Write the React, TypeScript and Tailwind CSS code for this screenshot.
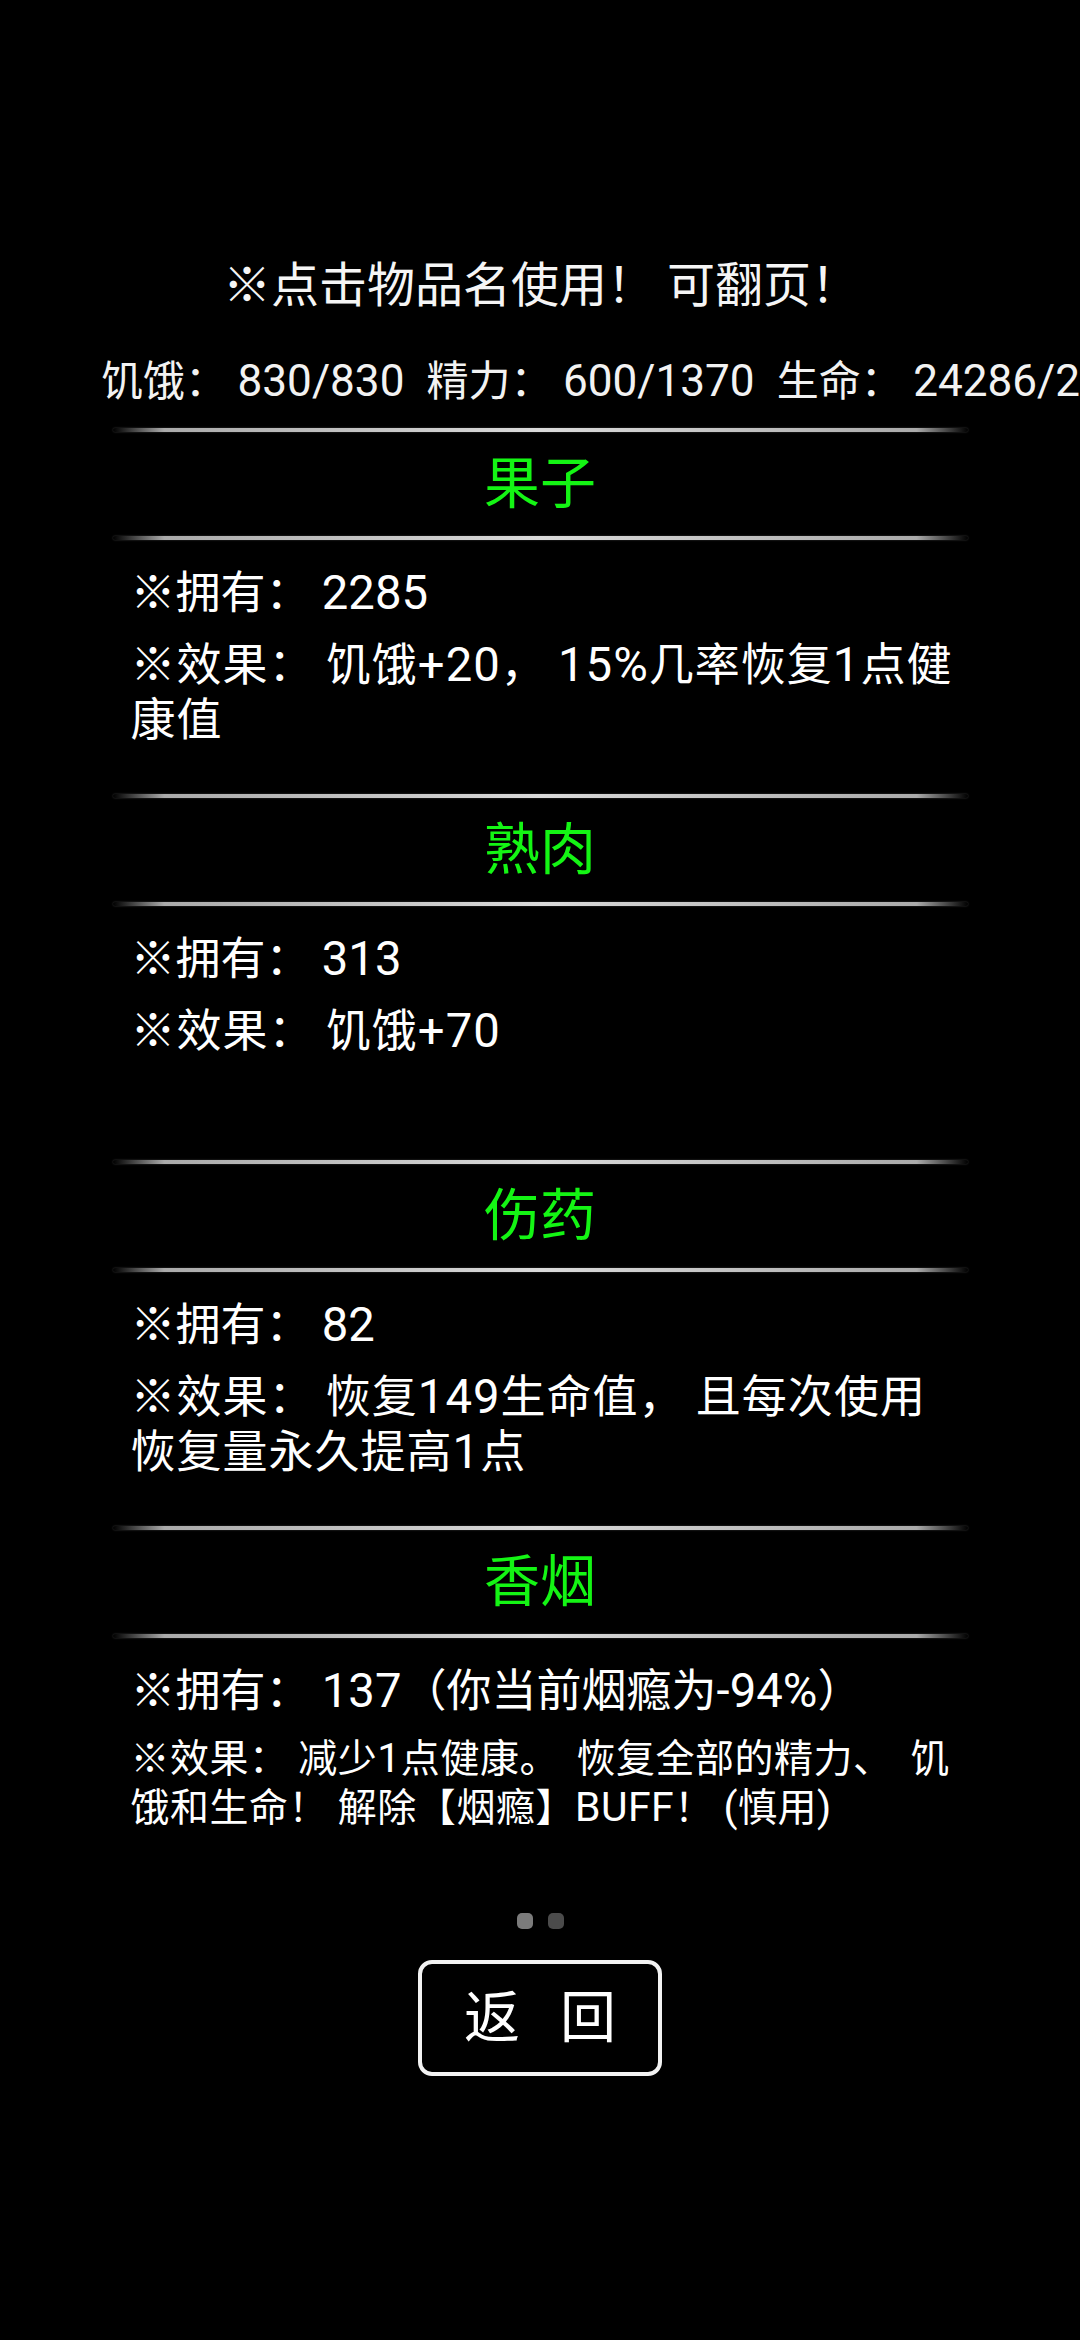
import React from 'react';

type Item = {
  name: string;
  owned: string;
  effect: string;
  small?: boolean;
};

const items: Item[] = [
  { name: '果子', owned: '2285', effect: '饥饿+20，15%几率恢复1点健康值' },
  { name: '熟肉', owned: '313', effect: '饥饿+70' },
  { name: '伤药', owned: '82', effect: '恢复149生命值，且每次使用恢复量永久提高1点' },
  {
    name: '香烟',
    owned: '137（你当前烟瘾为-94%）',
    effect: '减少1点健康。恢复全部的精力、饥饿和生命！解除【烟瘾】BUFF！(慎用)',
    small: true,
  },
];

// the game font gives full-width punctuation a wider cell and slightly bigger digits
const spaced = (text: string, latin = 'text-[1.05em]') => {
  const out: React.ReactNode[] = [];
  let run = '';
  const flush = () => {
    if (run) {
      out.push(<span key={out.length} className={latin}>{run}</span>);
      run = '';
    }
  };
  for (const c of text) {
    if (c.charCodeAt(0) < 128) {
      run += c;
      continue;
    }
    flush();
    if ('：，！'.includes(c)) out.push(<span key={out.length} className="mr-[0.25em]">{c}</span>);
    else if ('。、'.includes(c)) out.push(<span key={out.length} className="mr-[0.45em]">{c}</span>);
    else out.push(c);
  }
  flush();
  return out;
};

const Divider: React.FC = () => (
  <div className="h-[4px] w-full rounded-full bg-[linear-gradient(90deg,rgba(200,200,200,0)_0%,rgba(200,200,200,0.85)_6%,#dadada_50%,rgba(200,200,200,0.85)_94%,rgba(200,200,200,0)_100%)] shadow-[0_0_2px_rgba(255,255,255,0.25)]" />
);

const ItemBlock: React.FC<{ item: Item }> = ({ item }) => (
  <div className="h-[366px]">
    <Divider />
    <div className="h-[104px] flex items-center justify-center text-[56px] leading-none text-[#14f514]">
      {item.name}
    </div>
    <Divider />
    <div className="pl-[18px] pr-[10px] pt-[26px] text-white">
      <p className="text-[45px] leading-[55px] whitespace-nowrap">{spaced('※拥有：' + item.owned)}</p>
      {item.small ? (
        <p className="mt-[15px] text-[39px] leading-[48px] tracking-[0.5px]">{spaced('※效果：' + item.effect)}</p>
      ) : (
        <p className="mt-[17px] text-[45px] leading-[55px] tracking-[1px]">{spaced('※效果：' + item.effect)}</p>
      )}
    </div>
  </div>
);

const App: React.FC = () => {
  return (
    <div className="w-[1080px] min-h-[2340px] bg-black overflow-hidden text-white font-[Roboto,'Noto_Sans_CJK_SC',sans-serif]">
      {/* hint */}
      <div className="pt-[256px] pl-[14px] text-center text-[48px] leading-[60px] text-[#f5f5f5]">
        {spaced('※点击物品名使用！可翻页！')}
      </div>

      {/* stats row, runs past the right edge */}
      <div className="mt-[40px] pl-[101px] flex whitespace-nowrap text-[42px] leading-[50px] text-[#f2f2f2]">
        <span>{spaced('饥饿：830/830')}</span>
        <span className="ml-[22px]">{spaced('精力：600/1370')}</span>
        <span className="ml-[22px]">{spaced('生命：24286/24286')}</span>
      </div>

      {/* pager */}
      <div className="mt-[21px] mx-auto w-[855px]">
        {items.map(item => (
          <ItemBlock key={item.name} item={item} />
        ))}
      </div>

      {/* page dots */}
      <div className="mt-[21px] flex justify-center gap-[15px]">
        <div className="w-[16px] h-[16px] rounded-[5px] bg-[#7b7b7b]" />
        <div className="w-[16px] h-[16px] rounded-[5px] bg-[#4b4b4b]" />
      </div>

      {/* back */}
      <div className="mt-[31px] flex justify-center">
        <button className="w-[244px] h-[116px] border-[4px] border-[#f2f2f2] rounded-[14px] flex items-center justify-center gap-[40px] text-[56px] leading-none text-white">
          <span>返</span>
          <span>回</span>
        </button>
      </div>
    </div>
  );
};

export default App;
